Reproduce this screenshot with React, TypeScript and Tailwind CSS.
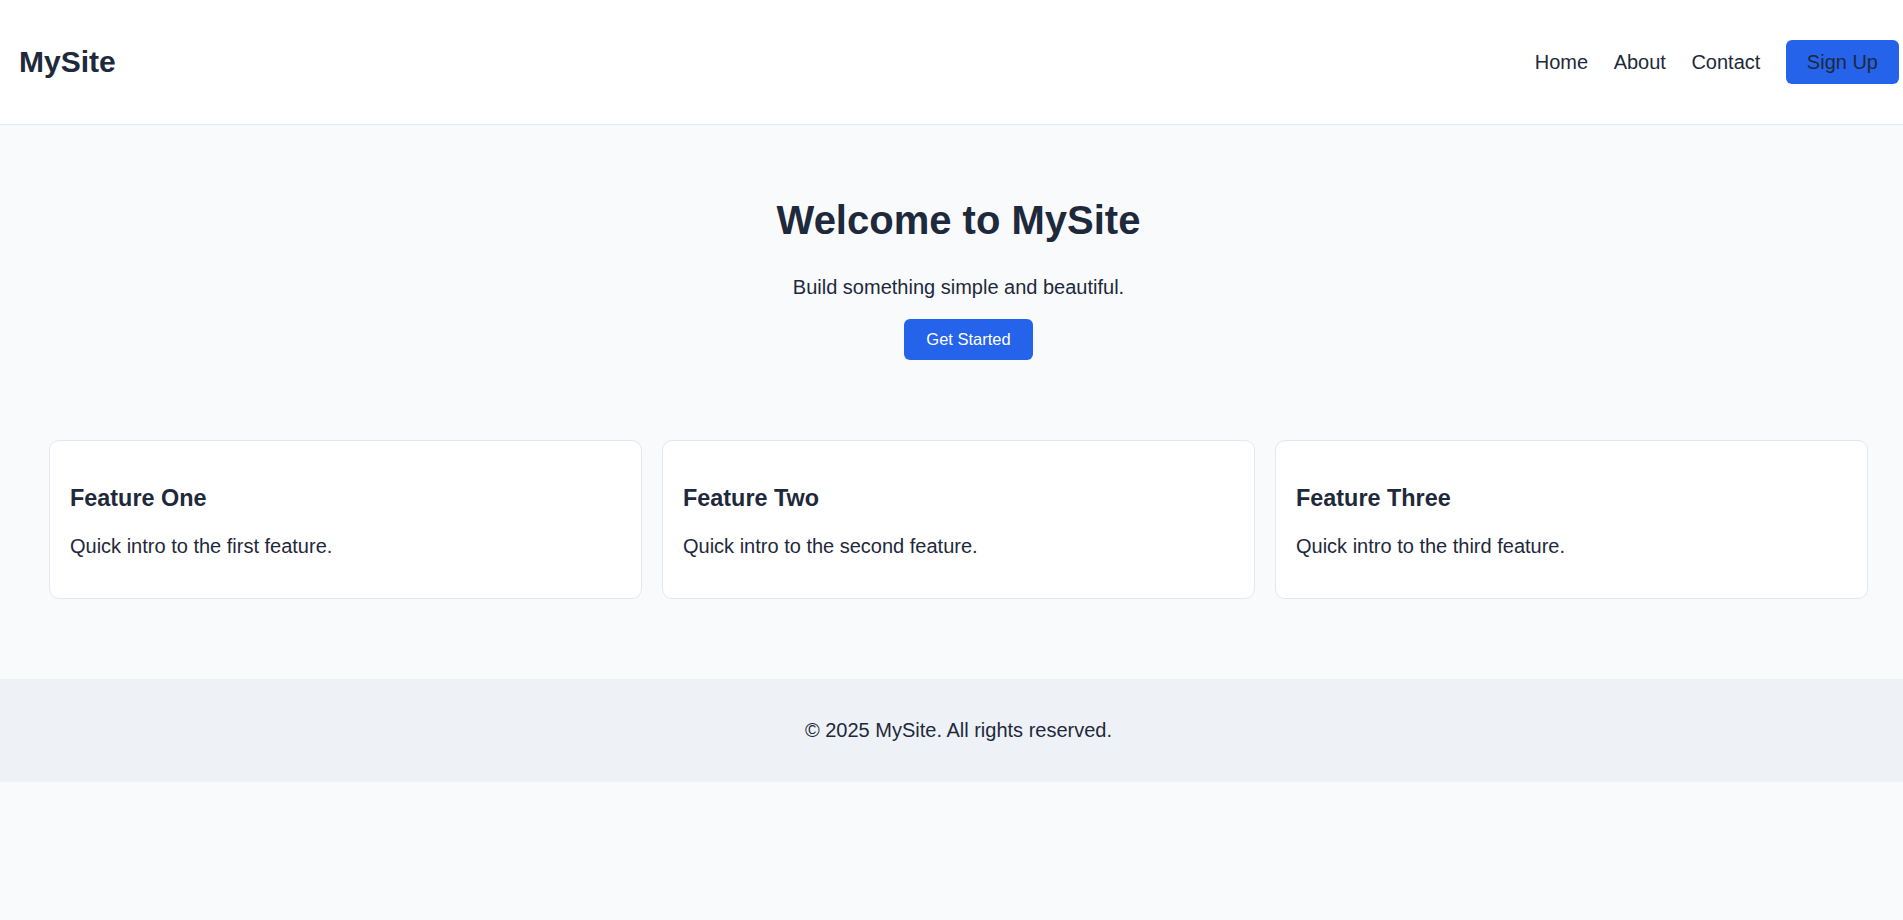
const features = [
  { title: "Feature One", text: "Quick intro to the first feature." },
  { title: "Feature Two", text: "Quick intro to the second feature." },
  { title: "Feature Three", text: "Quick intro to the third feature." },
];

const navLinks = ["Home", "About", "Contact"];

export default function App() {
  return (
    <div className="w-full min-h-screen overflow-hidden bg-[#f8fafc] text-[#1e293b] font-['Liberation_Sans',Arial,sans-serif] text-[20px]">
      <div className="w-[1917px]">
        {/* Header */}
        <header className="flex items-center justify-between bg-white border-b border-[#e2e8f0] py-10 pl-[19px] pr-[18px]">
          <div className="text-[30px] font-bold leading-[34px]">MySite</div>
          <nav className="flex items-center gap-[25.5px]">
            {navLinks.map((link) => (
              <a key={link} href="#" className="leading-[23px]">
                {link}
              </a>
            ))}
            <button className="bg-[#2563eb] text-[#1e293b] rounded-md px-[21px] py-[10px] leading-[24px]">
              Sign Up
            </button>
          </nav>
        </header>

        {/* Hero */}
        <section className="pt-[72px] text-center">
          <h1 className="text-[40px] font-bold leading-[46px]">Welcome to MySite</h1>
          <p className="mt-[33px] leading-[23px]">Build something simple and beautiful.</p>
          <button className="mt-5 ml-5 bg-[#2563eb] text-white rounded-md text-[16.5px] leading-[19px] px-[22px] py-[11px]">
            Get Started
          </button>
        </section>

        {/* Features */}
        <section className="mt-[80px] px-[49px] grid grid-cols-3 gap-5">
          {features.map((f) => (
            <div key={f.title} className="bg-white border border-[#e2e8f0] rounded-[10px] px-5 pt-[21px] pb-5">
              <h3 className="mt-[23px] mb-[23px] text-[23.4px] font-bold leading-[27px]">{f.title}</h3>
              <p className="mb-5 leading-[23px]">{f.text}</p>
            </div>
          ))}
        </section>

        {/* Footer */}
        <footer className="mt-[80px] bg-[#eef2f7] py-10 text-center leading-[23px]">
          © 2025 MySite. All rights reserved.
        </footer>
      </div>
    </div>
  );
}
